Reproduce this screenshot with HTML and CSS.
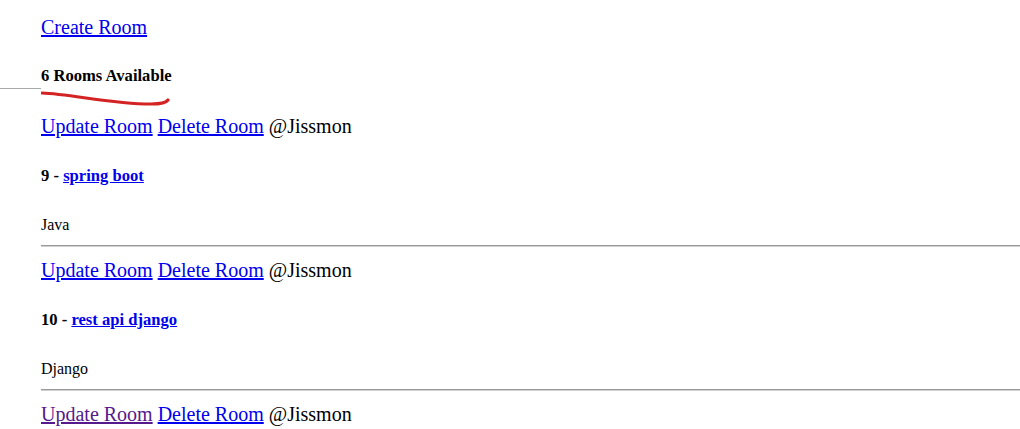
FILE: index.html
```html
<!DOCTYPE html>
<html>
<head>
<meta charset="utf-8">
<link rel="stylesheet" href="styles.css">
</head>
<body>
<div class="layout">
  <aside class="side">
    <hr class="side-rule">
  </aside>
  <main class="main">
    <a class="link big" href="#">Create Room</a>
    <div class="heading-wrap">
      <h5 class="count">6 Rooms Available</h5>
      <svg class="scribble" width="132" height="16" viewBox="0 0 132 16">
        <path d="M1 2 C 30 3, 70 13, 110 13 C 120 13, 125 12, 127 9" fill="none" stroke="#d42323" stroke-width="3.2" stroke-linecap="round"/>
      </svg>
    </div>

    <div class="room room-first">
      <div class="actions"><a class="link" href="#">Update Room</a> <a class="link" href="#">Delete Room</a> <span>@Jissmon</span></div>
      <h5 class="title">9 - <a class="link" href="#">spring boot</a></h5>
      <small class="topic">Java</small>
      <hr class="rule">
    </div>

    <div class="room">
      <div class="actions"><a class="link" href="#">Update Room</a> <a class="link" href="#">Delete Room</a> <span>@Jissmon</span></div>
      <h5 class="title">10 - <a class="link" href="#">rest api django</a></h5>
      <small class="topic">Django</small>
      <hr class="rule">
    </div>

    <div class="room">
      <div class="actions"><a class="link visited" href="#">Update Room</a> <a class="link" href="#">Delete Room</a> <span>@Jissmon</span></div>
    </div>
  </main>
</div>
</body>
</html>
```

FILE: styles.css
```css
html, body {
  margin: 0;
  padding: 0;
  background: #ffffff;
}

body {
  font-family: "Liberation Serif", "Times New Roman", serif;
  font-size: 20px;
  color: #000000;
  overflow: hidden;
}

.layout {
  display: grid;
  grid-template-columns: 41px 1fr;
}

.side-rule {
  margin: 88px 0 0 0;
  border: 0;
  border-top: 1px solid #a8a8a8;
  height: 0;
}

.main {
  display: flex;
  flex-direction: column;
  align-items: flex-start;
  padding-top: 16px;
}

.link {
  color: #0000ee;
  text-decoration: underline;
}

.link.visited {
  color: #551a8b;
}

.big {
  font-size: 20px;
  line-height: 23px;
}

.heading-wrap {
  position: relative;
  margin-top: 27px;
}

.count {
  margin: 0;
  font-size: 16.6px;
  line-height: 19px;
  font-weight: bold;
}

.scribble {
  position: absolute;
  left: 0;
  top: 25px;
}

.room {
  display: flex;
  flex-direction: column;
  align-items: flex-start;
  align-self: stretch;
}

.room-first {
  margin-top: 30px;
}

.actions {
  font-size: 20px;
  line-height: 23px;
  white-space: nowrap;
}

.title {
  margin: 28px 0 0 0;
  font-size: 16.6px;
  line-height: 19px;
  font-weight: bold;
}

.topic {
  margin-top: 31px;
  font-size: 16px;
  line-height: 18px;
}

.rule {
  align-self: stretch;
  margin: 11px 0 12px 0;
  border: 0;
  border-top: 1px solid #9a9a9a;
  border-bottom: 1px solid #d0d0d0;
  height: 0;
}
```
